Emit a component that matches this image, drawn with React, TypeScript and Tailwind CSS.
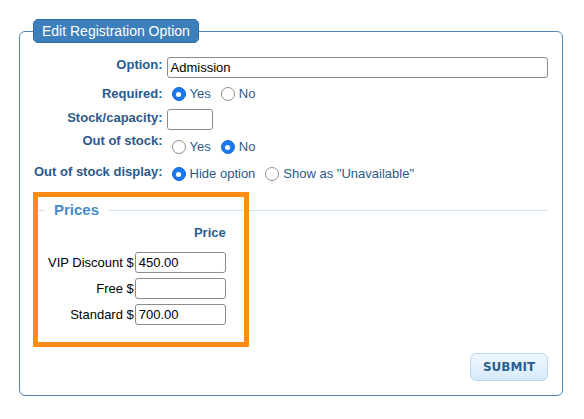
import React from "react";

const labelCls = "text-right font-bold text-[13px] leading-4 text-[#2b598a] whitespace-nowrap";

const Radio: React.FC<{ checked?: boolean }> = ({ checked }) =>
    checked ? (
        <span className="ml-[5px] mr-[4px] w-[14px] h-[14px] rounded-full bg-[#1a78f2] border border-[#1567d6] flex items-center justify-center shrink-0">
            <span className="w-[5px] h-[5px] rounded-full bg-white"></span>
        </span>
    ) : (
        <span className="ml-[5px] mr-[4px] w-[14px] h-[14px] rounded-full bg-white border border-[#8e8e8e] shrink-0"></span>
    );

const Option: React.FC<{ label: string; checked?: boolean }> = ({ label, checked }) => (
    <span className="flex items-center">
        <Radio checked={checked} />
        <span className="text-[13px] leading-4 text-[#2b598a]">{label}</span>
    </span>
);

const TextBox: React.FC<{ value?: string; className?: string }> = ({ value = "", className = "" }) => (
    <div className={`h-[21px] border border-[#8c8c8c] rounded-[3px] bg-white pl-[3px] text-[13px] leading-[19px] text-black ${className}`}>
        {value}
    </div>
);

const prices = [
    { name: "VIP Discount", value: "450.00" },
    { name: "Free", value: "" },
    { name: "Standard", value: "700.00" },
];

export default function App() {
    return (
        <div className="min-h-screen bg-white font-['Liberation_Sans',Arial,sans-serif] pt-[19px] pl-[19px]">
            <fieldset className="w-[544px] border border-[#5186b4] rounded-[6px] px-[14px] pt-[14px] pb-[14px]">
                <legend className="-ml-px px-[8px] py-[3px] bg-[#3d7fbb] border border-[#2f6ca6] rounded-[5px] text-white text-[14px] leading-4">
                    Edit Registration Option
                </legend>

                {/* Main fields */}
                <div className="grid grid-cols-[auto_1fr] gap-x-1">
                    <div className={`${labelCls} h-[23px]`}>Option:</div>
                    <div className="h-[23px]">
                        <TextBox value="Admission" className="w-full" />
                    </div>

                    <div className={`${labelCls} h-[26px] pt-[6px]`}>Required:</div>
                    <div className="h-[26px] pt-[2px] flex items-center gap-[5px]">
                        <Option label="Yes" checked />
                        <Option label="No" />
                    </div>

                    <div className={`${labelCls} h-[27px] pt-[4px]`}>Stock/capacity:</div>
                    <div className="h-[27px] pt-[3px]">
                        <TextBox className="w-[46px]" />
                    </div>

                    <div className={`${labelCls} h-[25px]`}>Out of stock:</div>
                    <div className="h-[25px] pt-[6px] flex items-start gap-[5px]">
                        <Option label="Yes" />
                        <Option label="No" checked />
                    </div>

                    <div className={`${labelCls} h-[27px] pt-[6px]`}>Out of stock display:</div>
                    <div className="h-[27px] pt-[8px] flex items-start gap-[5px]">
                        <Option label="Hide option" checked />
                        <Option label={'Show as "Unavailable"'} />
                    </div>
                </div>

                {/* Prices */}
                <div className="relative pt-[15px]">
                    <fieldset className="border-t border-[#cfe2f0] pl-[14px]">
                        <legend className="-ml-[3px] px-[9px] text-[15px] leading-5 font-bold text-[#4a8bc5]">Prices</legend>
                        <div className="grid grid-cols-[auto_91px] gap-x-[1px] gap-y-[5px] w-max pt-[5px] items-center">
                            <div></div>
                            <div className="text-right font-bold text-[13px] leading-4 text-[#2b5d8f] mb-[6px]">Price</div>
                            {prices.map((p) => (
                                <React.Fragment key={p.name}>
                                    <div className="text-right text-[13px] leading-4 text-black whitespace-nowrap">{p.name} $</div>
                                    <TextBox value={p.value} className="w-[91px]" />
                                </React.Fragment>
                            ))}
                        </div>
                    </fieldset>
                    {/* highlight box */}
                    <div className="absolute left-[-1px] top-[7px] w-[216px] h-[155px] border-[5px] border-[#ff8c14] pointer-events-none"></div>
                </div>

                <div className="flex justify-end mt-[28px]">
                    <button className="w-[78px] h-[28px] rounded-[6px] border border-[#bad5ee] bg-linear-to-b from-[#eef6fe] via-[#e4f1fc] to-[#d6e9f9] font-['DejaVu_Sans',Verdana,sans-serif] font-bold text-[12px] text-[#2e5e8e]">
                        SUBMIT
                    </button>
                </div>
            </fieldset>
        </div>
    );
}
